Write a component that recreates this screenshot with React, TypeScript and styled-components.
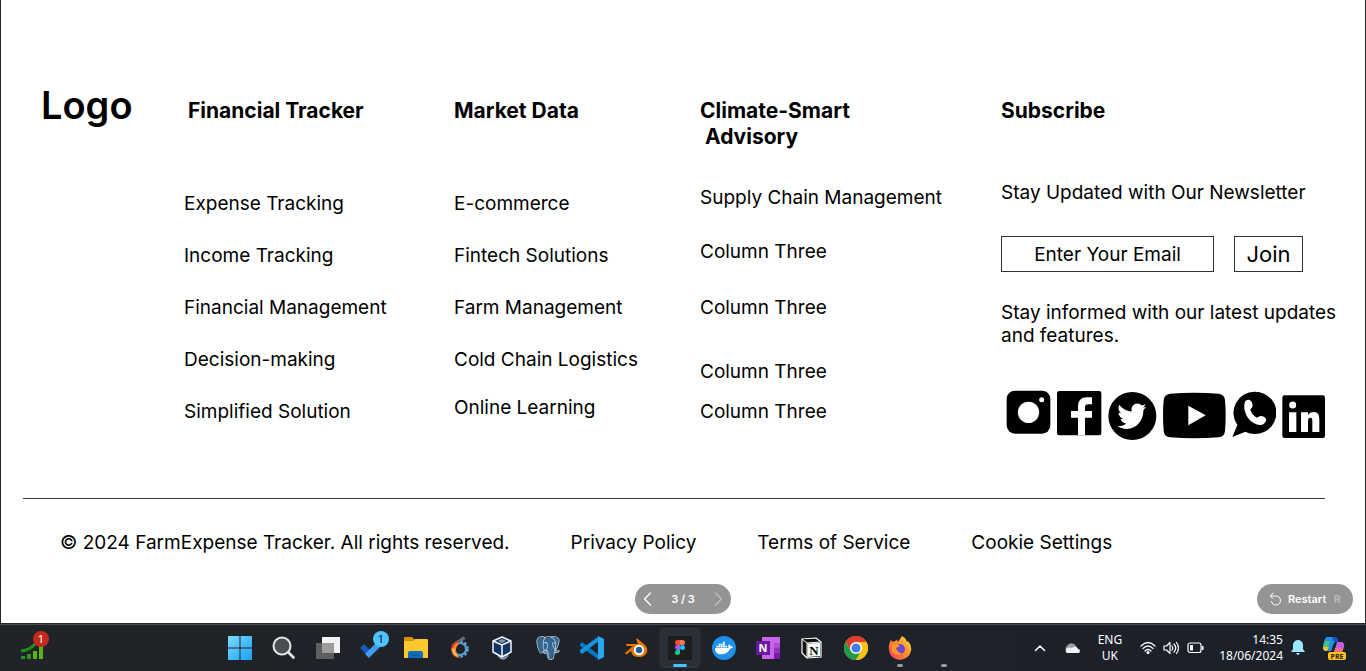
import React from "react";
import styled, { createGlobalStyle } from "styled-components";
import { SiPostgresql } from "react-icons/si";
import { FaDocker } from "react-icons/fa";

const GlobalStyle = createGlobalStyle`
  *, *::before, *::after { box-sizing: border-box; }
  body { margin: 0; background: #fff; }
  a { color: inherit; text-decoration: none; }
  button, input { font: inherit; color: inherit; }
`;

const Screen = styled.div`
  display: flex;
  flex-direction: column;
  min-height: 100vh;
  font-family: Inter, "Liberation Sans", sans-serif;
  color: #000;
`;

const Stage = styled.main`
  position: relative;
  flex: 1;
  background: #fff;
  border: 1px solid #25272a;
  border-top: 0;
`;

const Footer = styled.footer`
  padding-top: 81px;
  padding-bottom: 64px;
  font-size: 19px;
  line-height: 24px;
`;

const Columns = styled.div`
  display: grid;
  grid-template-columns: 143fr 270fr 246fr 301fr 364fr;
  padding-left: 40px;
`;

const Logo = styled.a`
  font-size: 38px;
  line-height: 48px;
  font-weight: 600;
`;

const Column = styled.section`
  padding-top: 17px;
  min-width: 0;
`;

const Heading = styled.h2<{ $inset?: number }>`
  margin: 0;
  min-height: 52px;
  padding-left: ${(p) => p.$inset ?? 0}px;
  font-size: 21px;
  line-height: 26px;
  font-weight: 700;
  white-space: pre;
`;

const LinkList = styled.ul<{ $lead: number }>`
  list-style: none;
  margin: ${(p) => p.$lead}px 0 0;
  padding: 0;
`;

const LinkItem = styled.li<{ $gap: number }>`
  margin-top: ${(p) => p.$gap}px;
  white-space: nowrap;
`;

const Lead = styled.p`
  margin: 31px 0;
  white-space: nowrap;
`;

const Form = styled.form`
  display: flex;
  gap: 20px;
`;

const Email = styled.input`
  width: 213px;
  height: 36px;
  padding: 0 8px;
  border: 1px solid #333;
  border-radius: 0;
  background: #fff;
  text-align: center;
  &::placeholder { color: #000; opacity: 1; }
`;

const Join = styled.button`
  width: 69px;
  height: 36px;
  padding: 0;
  border: 1px solid #333;
  background: #fff;
  font-size: 22px;
`;

const Note = styled.p`
  margin: 29px 24px 0 0;
  line-height: 23px;
`;

const Socials = styled.div`
  display: flex;
  gap: 6px;
  margin-top: 43px;
  padding-left: 5px;
  a, svg { display: block; }
`;

const Rule = styled.hr`
  margin: 58px 40px 0 22px;
  border: 0;
  border-top: 1px solid #3a3a3a;
`;

const Legal = styled.div`
  display: flex;
  flex-wrap: wrap;
  gap: 8px 61px;
  padding: 32px 20px 0 59px;
`;

const Pill = styled.div`
  position: absolute;
  bottom: 9px;
  display: flex;
  align-items: center;
  justify-content: space-between;
  width: 96px;
  height: 30px;
  border-radius: 15px;
  background: #949494;
  color: #fff;
  font-size: 11px;
  font-weight: 600;
`;

const Pager = styled(Pill)`
  left: 50%;
  margin-left: -48px;
  padding: 0 8px;
`;

const Restart = styled(Pill)`
  right: 12px;
  padding: 0 12px;
`;

const PillButton = styled.button<{ $faded?: boolean }>`
  display: flex;
  align-items: center;
  gap: 6px;
  padding: 0;
  border: 0;
  background: none;
  color: #fff;
  opacity: ${(p) => (p.$faded ? 0.4 : 1)};
`;

const Key = styled.span`
  opacity: 0.35;
`;

const Taskbar = styled.nav`
  display: flex;
  align-items: center;
  height: 47px;
  border-top: 1px solid #484a4c;
  background: linear-gradient(90deg, #202327, #1f2229 50%, #1b2029);
  color: #fff;
  font-family: "Noto Sans", "Open Sans", sans-serif;
`;

const Widgets = styled.div`
  width: 218px;
  padding-left: 10px;
`;

const TaskButton = styled.button<{ $active?: boolean }>`
  display: flex;
  justify-content: center;
  align-items: center;
  width: 40px;
  height: 40px;
  margin: 0 2px;
  padding: 0;
  border: 1px solid ${(p) => (p.$active ? "#33373d" : "transparent")};
  border-radius: 4px;
  background: ${(p) => (p.$active ? "#2b2f36" : "none")};
  svg { display: block; flex: none; }
`;

const AppStack = styled.span`
  position: relative;
  display: flex;
`;

const Indicator = styled.span<{ $wide?: boolean }>`
  position: absolute;
  left: 50%;
  bottom: -7px;
  width: ${(p) => (p.$wide ? 14 : 6)}px;
  height: 3px;
  border-radius: 2px;
  background: ${(p) => (p.$wide ? "#4cc2ff" : "#9a9a9a")};
  transform: translateX(-50%);
`;

const Badge = styled.span<{ $blue?: boolean }>`
  position: absolute;
  top: -5px;
  right: -5px;
  width: 16px;
  height: 16px;
  border-radius: 8px;
  background: ${(p) => (p.$blue ? "#4cc2ff" : "#c42b1c")};
  color: ${(p) => (p.$blue ? "#111" : "#fff")};
  font-size: 11px;
  line-height: 16px;
  text-align: center;
`;

const Tray = styled.div`
  display: flex;
  align-items: center;
  margin-left: auto;
  padding-right: 20px;
  font-size: 12px;
  line-height: 16px;
  svg { display: block; flex: none; }
`;

const TrayGroup = styled.div<{ $gap: number; $after: number }>`
  display: flex;
  align-items: center;
  gap: ${(p) => p.$gap}px;
  margin-right: ${(p) => p.$after}px;
`;

const TrayText = styled.div<{ $align: string; $after: number }>`
  margin-right: ${(p) => p.$after}px;
  text-align: ${(p) => p.$align};
`;

type Entry = { label: string; gap: number };
type ColumnData = { title: string; inset?: number; lead: number; items: Entry[] };

const columns: ColumnData[] = [
  {
    title: "Financial Tracker",
    inset: 4,
    lead: 42,
    items: [
      { label: "Expense Tracking", gap: 0 },
      { label: "Income Tracking", gap: 28 },
      { label: "Financial Management", gap: 28 },
      { label: "Decision-making", gap: 28 },
      { label: "Simplified Solution", gap: 28 },
    ],
  },
  {
    title: "Market Data",
    lead: 42,
    items: [
      { label: "E-commerce", gap: 0 },
      { label: "Fintech Solutions", gap: 28 },
      { label: "Farm Management", gap: 28 },
      { label: "Cold Chain Logistics", gap: 28 },
      { label: "Online Learning", gap: 24 },
    ],
  },
  {
    title: "Climate-Smart\n Advisory",
    lead: 36,
    items: [
      { label: "Supply Chain Management", gap: 0 },
      { label: "Column Three", gap: 30 },
      { label: "Column Three", gap: 32 },
      { label: "Column Three", gap: 40 },
      { label: "Column Three", gap: 16 },
    ],
  },
];

const socials = [
  {
    name: "Instagram", x: 48, w: 45,
    art: (
      <>
        <rect x="50" y="32" width="131" height="129" rx="25" />
        <circle cx="115.500" cy="97" r="32" fill="#fff" />
        <circle cx="155" cy="59" r="7.500" fill="#fff" />
      </>
    ),
  },
  {
    name: "Facebook", x: 201, w: 45,
    art: (
      <>
        <rect x="201" y="33" width="133" height="133" rx="7" />
        <path fill="#fff" d="M264 166v-53h-21V93h21V80c0-18 9-28 27-28h15v21h-11c-8 0-10 4-10 10v10h21v20h-21v53z" />
      </>
    ),
  },
  {
    name: "Twitter", x: 354, w: 49,
    art: (
      <>
        <circle cx="427" cy="108" r="72" />
        <path
          fill="#fff"
          transform="translate(382 62) scale(.17 .183)"
          d="M459.370 151.716c.325 4.548.325 9.097.325 13.645 0 138.720-105.583 298.558-298.558 298.558-59.452 0-114.680-17.219-161.137-47.106 8.447.974 16.568 1.299 25.340 1.299 49.055 0 94.213-16.568 130.274-44.832-46.132-.975-84.792-31.188-98.112-72.772 6.498.974 12.995 1.624 19.818 1.624 9.421 0 18.843-1.300 27.614-3.573-48.081-9.747-84.143-51.980-84.143-102.985v-1.299c13.969 7.797 30.214 12.670 47.431 13.319-28.264-18.843-46.781-51.005-46.781-87.391 0-19.492 5.197-37.360 14.294-52.954 51.655 63.675 129.300 105.258 216.365 109.807-1.624-7.797-2.599-15.918-2.599-24.040 0-57.828 46.782-104.934 104.934-104.934 30.213 0 57.502 12.670 76.670 33.137 23.715-4.548 46.456-13.320 66.599-25.340-7.798 24.366-24.366 44.833-46.132 57.827 21.117-2.273 41.584-8.122 60.426-16.243-14.292 20.791-32.161 39.308-52.628 54.253z"
        />
      </>
    ),
  },
  {
    name: "YouTube", x: 519, w: 63,
    art: (
      <>
        <path d="M540 41q73-6 146 0 17 2 19 19 4 47 0 93-2 17-19 19-73 6-146 0-17-2-19-19-4-46 0-93 2-17 19-19z" />
        <path fill="#fff" d="M595 77v59l52-30z" />
      </>
    ),
  },
  {
    name: "WhatsApp", x: 726, w: 44,
    art: (
      <>
        <path d="M794 35a64 63.500 0 1 1-28 120L727 171l15-36A64 63.500 0 0 1 794 35z" />
        <path fill="#fff" d="M764 68c2-8 12-11 18-6 5 5 7 12 5 18-1 4-5 6-6 9 3 11 10 19 20 24 4-1 6-5 11-5 7 0 14 3 16 9 2 8-6 17-15 18-14 1-29-8-38-20-9-13-15-31-11-47z" />
      </>
    ),
  },
  {
    name: "LinkedIn", x: 876, w: 43,
    art: (
      <>
        <rect x="877" y="46" width="128" height="128" rx="7" />
        <circle cx="908" cy="75" r="10.500" fill="#fff" />
        <path fill="#fff" d="M897 97h22v59h-22zM933 97h21v8c5-7 11-9 17-9 13 0 17 9 17 22v38h-21v-33c0-7-1-10-6-10-5 0-7 4-7 10v33h-21z" />
      </>
    ),
  },
];

const Ico = ({ s = 24, children }: { s?: number; children: React.ReactNode }) => (
  <svg width={s} height={s} viewBox="0 0 24 24" aria-hidden="true">{children}</svg>
);

type App = { name: string; icon: React.ReactNode; active?: boolean; running?: boolean; badge?: boolean };

const apps: App[] = [
  {
    name: "Start",
    icon: (
      <Ico>
        <defs>
          <linearGradient id="win" x1="0" y1="0" x2="1" y2="1" gradientUnits="objectBoundingBox">
            <stop offset="0" stopColor="#7bdcff" /><stop offset="1" stopColor="#1aa0f5" />
          </linearGradient>
        </defs>
        <path fill="url(#win)" d="M0 0h11.500v11.500H0zM12.500 0H24v11.500H12.500zM0 12.500h11.500V24H0zM12.500 12.500H24V24H12.500z" />
      </Ico>
    ),
  },
  {
    name: "Search",
    icon: (
      <Ico>
        <circle cx="10" cy="10" r="8.500" fill="#4b4e52" stroke="#e3e6e8" strokeWidth="2" />
        <path d="M16.500 16.500l5 5" stroke="#e3e6e8" strokeWidth="2.600" strokeLinecap="round" />
      </Ico>
    ),
  },
  {
    name: "Task view",
    icon: (
      <Ico>
        <path fill="#f3f3f3" d="M6 1h18v16H6z" />
        <path fill="#5d5e60" d="M0 7h18v16H0z" />
        <path fill="#9c9c9c" d="M6 7h12v10H6z" />
      </Ico>
    ),
  },
  {
    name: "To Do",
    badge: true,
    icon: (
      <Ico>
        <path fill="#185abd" d="M0 12l4-4 8 8-4 4z" />
        <path fill="#3f9bee" d="M5 18L17 6l4 4L9 22z" />
      </Ico>
    ),
  },
  {
    name: "File Explorer",
    icon: (
      <Ico>
        <path fill="#d98f08" d="M0 2q0-1 1-1h7l2 2v5H0z" />
        <path fill="#ffc72e" d="M0 5h9l2-2h12q1 0 1 1v18H0z" />
        <path fill="#0a6fc0" d="M4 22v-5q0-2 2-2h11q2 0 2 2v5z" />
        <path fill="#0a4f94" d="M7 18.500h9v1H7z" />
      </Ico>
    ),
  },
  {
    name: "Engine",
    icon: (
      <Ico>
        <circle cx="12" cy="13" r="7.500" fill="none" stroke="#5aa5dc" strokeWidth="2.500" strokeDasharray="2.600 1.800" />
        <circle cx="12" cy="13" r="6" fill="none" stroke="#5a9fd4" strokeWidth="2" />
        <path fill="#d83e27" d="M11 4Q3 6 3 14q1 8 9 8-5-3-5-8 0-5 4-7z" />
        <path fill="#f58a2c" d="M10 6Q5 9 5 14q1 6 7 8-4-4-4-8 0-4 3-6z" />
        <path fill="#ffd267" d="M4 12l2 1 1 4 3 4q-6-2-6-9z" />
        <path stroke="#656c73" strokeWidth="2" d="M9 6l7-5M13 5l4-3" />
      </Ico>
    ),
  },
  {
    name: "VirtualBox",
    icon: (
      <Ico>
        <circle cx="11" cy="18" r="5" fill="#4e67a7" stroke="#bac9e8" />
        <path fill="#123463" stroke="#f2f6fc" strokeWidth="1.500" strokeLinejoin="round" d="M1 5l9-4 9 4v11l-9 5-9-5z" />
        <path fill="none" stroke="#f2f6fc" strokeWidth="1.500" d="M1 5l9 4 9-4M10 9v12" />
        <path fill="#8295b0" d="M6 5l4-2 4 2-4 2z" />
      </Ico>
    ),
  },
  {
    name: "PostgreSQL",
    icon: (
      <Ico>
        <path fill="#336791" d="M1 5Q2 1 6 1l5 1q5-2 9-1 4 2 3 6-1 5-3 8l3 1q-2 2-6 2l-1 5q-3 2-5-1l-1-5-5-1Q1 14 1 5z" />
        <SiPostgresql size={24} color="#c5d5e2" />
      </Ico>
    ),
  },
  {
    name: "Visual Studio Code",
    icon: (
      <Ico>
        <path fill="#0879c5" d="M0 8l2-2 17 13v5L0 10z" />
        <path fill="#1594dd" d="M0 16l2 2L19 5V0L0 14z" />
        <path fill="#2aa7f2" d="M18 0l6 3v18l-6 3z" />
      </Ico>
    ),
  },
  {
    name: "Blender",
    icon: (
      <Ico>
        <path fill="#ea7600" d="M12 3q1-1 2 0l7 6q3 3 2 7-2 5-8 5-7 0-8-6l-4 3q-2 1-2-1l8-7H3q-1 0-1-2h12z" />
        <circle cx="15" cy="14" r="5.200" fill="#fff" />
        <circle cx="15" cy="14" r="3.200" fill="#235f9d" />
      </Ico>
    ),
  },
  {
    name: "Figma",
    active: true,
    icon: (
      <Ico>
        <path fill="#1e1e1e" d="M0 0h24v24H0z" />
        <path fill="#f24e1e" d="M12 4H9.500a2.500 2.500 0 0 0 0 5H12z" />
        <path fill="#ff7262" d="M12 4h2.500a2.500 2.500 0 0 1 0 5H12z" />
        <path fill="#a259ff" d="M12 9H9.500a2.500 2.500 0 0 0 0 5H12z" />
        <circle cx="14.500" cy="11.500" r="2.500" fill="#1abcfe" />
        <path fill="#0acf83" d="M12 14H9.500A2.500 2.500 0 1 0 12 16.500z" />
      </Ico>
    ),
  },
  {
    name: "Docker",
    icon: (
      <Ico>
        <circle cx="12" cy="12" r="12" fill="#1d91e8" />
        <svg x="3" y="3" width="18" height="18" viewBox="0 0 18 18"><FaDocker size={18} color="#fff" /></svg>
      </Ico>
    ),
  },
  {
    name: "OneNote",
    icon: (
      <Ico>
        <path fill="#ca64ea" d="M6 1h18v22H6z" />
        <path fill="#ae4bd5" d="M18 7h6v5h-6z" /><path fill="#9332bf" d="M18 12h6v5h-6z" /><path fill="#7719aa" d="M18 17h6v6h-6z" />
        <path fill="#6b17a0" d="M0 5h14v14H0z" />
        <text x="7" y="16" textAnchor="middle" fontSize="11" fontWeight="700" fill="#fff">N</text>
      </Ico>
    ),
  },
  {
    name: "Notion",
    icon: (
      <Ico>
        <path fill="#111" stroke="#fff" strokeWidth="1.200" strokeLinejoin="round" d="M2 3l14-1 5 4v15L7 22l-5-5z" />
        <path fill="#111" stroke="#fff" d="M2 3l5 4 14-1M7 7v15" />
        <path fill="#fff" d="M7.500 7.500L20 7v13L7.500 21z" />
        <text x="14" y="18.500" textAnchor="middle" fontFamily="Liberation Serif, serif" fontSize="13" fontWeight="700" fill="#000">N</text>
      </Ico>
    ),
  },
  {
    name: "Chrome",
    icon: (
      <Ico>
        <circle cx="12" cy="12" r="12" fill="#fbc116" />
        <path fill="#e33b2e" d="M1.600 6A12 12 0 0 1 22.400 6H12l-5.200 9z" />
        <path fill="#229a4b" d="M1.600 6A12 12 0 0 0 12 24l5.200-9H6.800z" />
        <path fill="#fbc116" d="M12 24l5.200-9V6h5.200A12 12 0 0 1 12 24z" />
        <circle cx="12" cy="12" r="6" fill="#fff" /><circle cx="12" cy="12" r="4.600" fill="#3f7ee8" />
      </Ico>
    ),
  },
  {
    name: "Firefox",
    running: true,
    icon: (
      <Ico>
        <defs>
          <linearGradient id="fox" x1="1" y1="0" x2="0" y2="1">
            <stop offset="0" stopColor="#ffe04a" /><stop offset=".5" stopColor="#ff8b26" /><stop offset="1" stopColor="#f6326c" />
          </linearGradient>
        </defs>
        <path fill="url(#fox)" d="M3 4l2 2 4-2 1 2 4-6q4 2 5 6l1-1q4 5 3 10-2 8-11 9Q2 23 1 14q-1-5 2-10z" />
        <circle cx="12" cy="13" r="5" fill="#7146cf" />
        <path fill="#ff9a28" d="M4 9q4-2 8 1-2 1-4 2 1 5 6 5-6 4-10-2z" />
      </Ico>
    ),
  },
  { name: "Background app", running: true, icon: <Ico><path d="" /></Ico> },
];

const line = { fill: "none", stroke: "currentColor", strokeLinecap: "round" as const, strokeLinejoin: "round" as const };

export default function App() {
  return (
    <Screen>
      <GlobalStyle />
      <Stage>
        <Footer>
          <Columns>
            <Logo href="#">Logo</Logo>
            {columns.map((c) => (
              <Column key={c.title}>
                <Heading $inset={c.inset}>{c.title}</Heading>
                <LinkList $lead={c.lead}>
                  {c.items.map((item, i) => (
                    <LinkItem key={i} $gap={item.gap}><a href="#">{item.label}</a></LinkItem>
                  ))}
                </LinkList>
              </Column>
            ))}
            <Column>
              <Heading>Subscribe</Heading>
              <Lead>Stay Updated with Our Newsletter</Lead>
              <Form onSubmit={(e) => e.preventDefault()}>
                <Email type="email" aria-label="Email address" placeholder="Enter Your Email" />
                <Join type="submit">Join</Join>
              </Form>
              <Note>Stay informed with our latest updates and features.</Note>
              <Socials>
                {socials.map((s) => (
                  <a key={s.name} href="#" aria-label={s.name}>
                    <svg width={s.w} height="50" viewBox={`${s.x} 30 ${s.w * 3} 150`}>{s.art}</svg>
                  </a>
                ))}
              </Socials>
            </Column>
          </Columns>
          <Rule />
          <Legal>
            <span>© 2024 FarmExpense Tracker. All rights reserved.</span>
            <a href="#">Privacy Policy</a>
            <a href="#">Terms of Service</a>
            <a href="#">Cookie Settings</a>
          </Legal>
        </Footer>
        <Pager>
          <PillButton aria-label="Previous">
            <svg width="9" height="14" viewBox="0 0 9 14"><path {...line} strokeWidth="1.300" d="M7.500 1L1.500 7l6 6" /></svg>
          </PillButton>
          <span>3 / 3</span>
          <PillButton $faded aria-label="Next">
            <svg width="9" height="14" viewBox="0 0 9 14"><path {...line} strokeWidth="1.300" d="M1.500 1l6 6-6 6" /></svg>
          </PillButton>
        </Pager>
        <Restart>
          <PillButton>
            <svg width="13" height="14" viewBox="0 0 13 14"><path {...line} d="M4 1L1.500 4 4 6.500M1.500 4H7a4.500 4.500 0 1 1-4.500 5.500" /></svg>
            Restart
          </PillButton>
          <Key>R</Key>
        </Restart>
      </Stage>
      <Taskbar aria-label="Taskbar">
        <Widgets>
          <TaskButton aria-label="Widgets">
            <AppStack>
              <svg width="24" height="24" viewBox="0 0 24 24" aria-hidden="true">
                <path fill="#2e9422" d="M1 20h4v3H1zM7 18h4v5H7z" />
                <path fill="#58b512" d="M13 15h4v8h-4zM19 10h4v13h-4z" />
                <path fill="none" stroke="#1e8d20" strokeWidth="3" d="M1 15q9-1 14-7" />
              </svg>
              <Badge>1</Badge>
            </AppStack>
          </TaskButton>
        </Widgets>
        {apps.map((a) => (
          <TaskButton key={a.name} aria-label={a.name} $active={a.active}>
            <AppStack>
              {a.icon}
              {a.badge && <Badge $blue>1</Badge>}
              {(a.active || a.running) && <Indicator $wide={a.active} />}
            </AppStack>
          </TaskButton>
        ))}
        <Tray>
          <TrayGroup $gap={18} $after={18}>
            <svg width="12" height="8" viewBox="0 0 12 8"><path {...line} strokeWidth="1.500" d="M1.500 6.500L6 2l4.500 4.500" /></svg>
            <svg width="16" height="12" viewBox="0 0 16 12">
              <path fill="#9c9ea1" d="M3 9A3 3 0 0 1 3 4a5 5 0 0 1 9 0l2 3z" />
              <path fill="#f4f4f4" d="M3 11a3 3 0 0 1 0-5q3-1 5 0 4-3 6 1a2 2 0 0 1 0 4z" />
            </svg>
          </TrayGroup>
          <TrayText $align="center" $after={18}>ENG<br />UK</TrayText>
          <TrayGroup $gap={7} $after={15}>
            <svg width="16" height="14" viewBox="0 0 16 14">
              <path {...line} strokeWidth="1.200" d="M1 5q7-7 14 0M3 7.500q5-5 10 0M5 10q3-3 6 0" />
              <circle cx="8" cy="11.500" r="1.500" fill="#fff" />
            </svg>
            <svg width="17" height="14" viewBox="0 0 17 14">
              <path {...line} strokeWidth="1.200" d="M1 5h2.500L7 1.500v11L3.500 9H1zM9 5q1.500 2 0 4M11 3q3.500 4 0 8M13.500 1.500q4 5.500 0 11" />
            </svg>
            <svg width="17" height="12" viewBox="0 0 17 12">
              <rect {...line} strokeWidth="1.200" x="1" y="1" width="13" height="9.500" rx="2" />
              <path fill="#fff" d="M3 3h3v5.500H3zM15 4h1.500v4H15z" />
            </svg>
          </TrayGroup>
          <TrayText $align="right" $after={8}>14:35<br />18/06/2024</TrayText>
          <TrayGroup $gap={17} $after={0}>
            <svg width="14" height="16" viewBox="0 0 14 16"><path fill="#9be7ff" d="M7 0a5 5 0 0 1 5 5v4l2 3H0l2-3V5a5 5 0 0 1 5-5zM5 13h4q-2 4-4 0z" /></svg>
            <svg width="24" height="24" viewBox="0 0 24 24">
              <path fill="#2191e8" d="M5 1h8q2 0 3 4l-4 2-3 8H4q-4 0-3-4 1-9 4-10z" />
              <path fill="#46c179" d="M3 5h5L5 15q-4 0-4-4z" />
              <path fill="#f4c425" d="M1 11h6l-2 4q-4 0-4-4z" />
              <path fill="#1c50c7" d="M10 1h3q2 0 3 5h-4z" />
              <path fill="#c061e0" d="M15 6h5q3 1 2 5l-2 6h-8z" />
              <path fill="#ef6b8b" d="M13 12h8l-1 5h-8z" />
              <rect x="6" y="16" width="18" height="8" rx="2" fill="#ffc20e" />
              <text x="15" y="22.500" textAnchor="middle" fontSize="7" fontWeight="700" fill="#222">PRE</text>
            </svg>
          </TrayGroup>
        </Tray>
      </Taskbar>
    </Screen>
  );
}
